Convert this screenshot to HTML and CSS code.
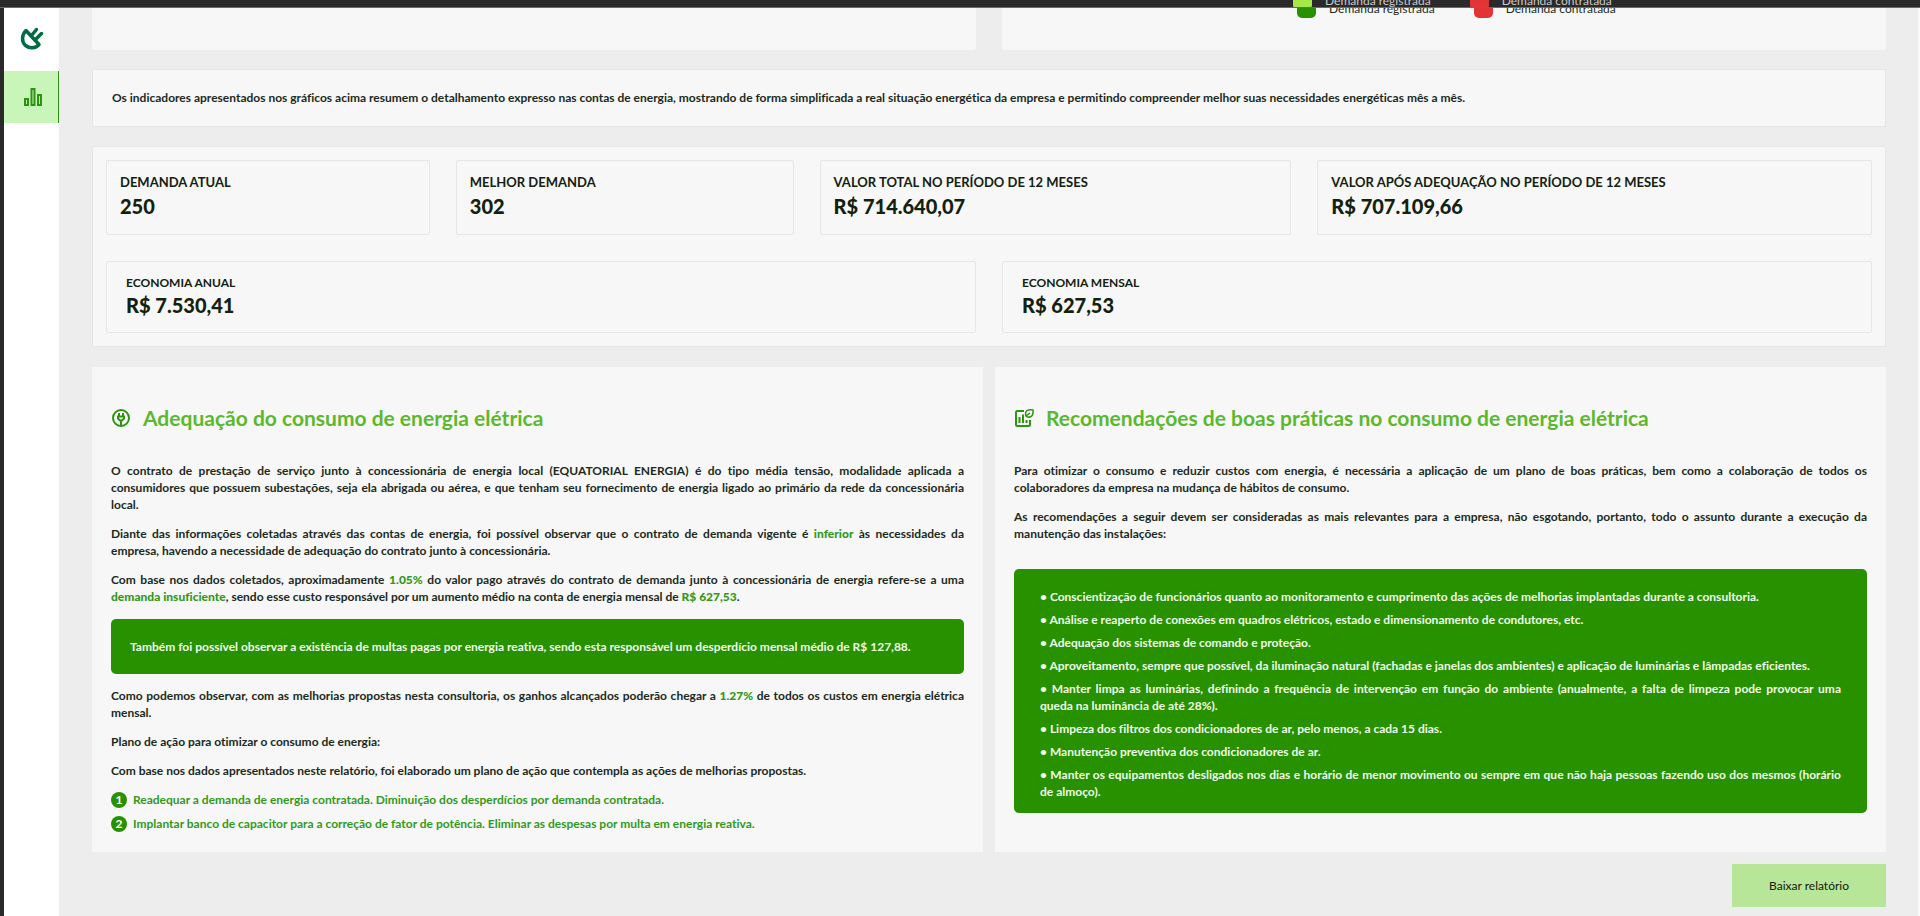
FILE: index.html
```html
<!DOCTYPE html>
<html lang="pt-BR">
<head>
<meta charset="utf-8">
<title>Relatório de demanda</title>
<link rel="stylesheet" href="styles.css">
</head>
<body>
<div class="topbar">
  <div class="legend legend-top">
    <span class="legend-item"><i class="swatch lime"></i>Demanda registrada</span>
    <span class="legend-item"><i class="swatch red"></i>Demanda contratada</span>
  </div>
</div>
<div class="shell">
  <nav class="sidebar" aria-label="Principal">
    <a class="logo" href="#" aria-label="Início">
      <svg width="24" height="24" viewBox="0 0 24 24" fill="none" stroke="#006b45" stroke-width="3.500" stroke-linecap="round" stroke-linejoin="round"><path d="M6 4.500C1.500 9 1.500 16 5.500 19.500C10 23 15.500 22.500 19 18.500Z"/><path d="M11.500 9.500L16.500 3.500M15.500 13.500L21.500 7.500"/></svg>
    </a>
    <a class="nav-item" href="#" aria-label="Relatórios">
      <svg width="20" height="20" viewBox="0 0 20 20" fill="none" stroke="#2c9410" stroke-width="2"><path d="M2 12h3v6H2zM8.500 2h3v16h-3zM15 8h3v10h-3z"/></svg>
    </a>
  </nav>
  <main class="content">
    <div class="charts">
      <section class="chart-card"></section>
      <section class="chart-card">
        <div class="legend">
          <span class="legend-item"><i class="swatch green"></i>Demanda registrada</span>
          <span class="legend-item"><i class="swatch red"></i>Demanda contratada</span>
        </div>
      </section>
    </div>
    <p class="notice">Os indicadores apresentados nos gráficos acima resumem o detalhamento expresso nas contas de energia, mostrando de forma simplificada a real situação energética da empresa e permitindo compreender melhor suas necessidades energéticas mês a mês.</p>
    <section class="summary">
      <div class="row four">
        <div class="stat"><h3>DEMANDA ATUAL</h3><strong>250</strong></div>
        <div class="stat"><h3>MELHOR DEMANDA</h3><strong>302</strong></div>
        <div class="stat"><h3>VALOR TOTAL NO PERÍODO DE 12 MESES</h3><strong>R$ 714.640,07</strong></div>
        <div class="stat"><h3>VALOR APÓS ADEQUAÇÃO NO PERÍODO DE 12 MESES</h3><strong>R$ 707.109,66</strong></div>
      </div>
      <div class="row two">
        <div class="stat small"><h3>ECONOMIA ANUAL</h3><strong>R$ 7.530,41</strong></div>
        <div class="stat small"><h3>ECONOMIA MENSAL</h3><strong>R$ 627,53</strong></div>
      </div>
    </section>
    <div class="panels">
      <section class="panel">
        <h2><svg width="20" height="20" viewBox="0 0 20 20" fill="none" stroke="#2c9410" stroke-width="2"><circle cx="10" cy="10" r="8"/><path d="M8 5v3M12 5v3M10 13v5"/><path d="M6 8.500h8M7 8.500v2l2 2h2l2-2v-2"/></svg>Adequação do consumo de energia elétrica</h2>
        <p>O contrato de prestação de serviço junto à concessionária de energia local (EQUATORIAL ENERGIA) é do tipo média tensão, modalidade aplicada a consumidores que possuem subestações, seja ela abrigada ou aérea, e que tenham seu fornecimento de energia ligado ao primário da rede da concessionária local.</p>
        <p>Diante das informações coletadas através das contas de energia, foi possível observar que o contrato de demanda vigente é <b>inferior</b> às necessidades da empresa,&nbsp;havendo a necessidade de adequação do contrato junto à concessionária.</p>
        <p>Com base nos dados coletados, aproximadamente <b>1.05%</b> do valor pago através do contrato de demanda junto à concessionária de energia refere-se a uma <b>demanda insuficiente</b>, sendo esse custo responsável por um aumento médio na conta de energia mensal de <b>R$ 627,53</b>.</p>
        <p class="callout">Também foi possível observar a existência de multas pagas por energia reativa, sendo esta responsável um desperdício mensal médio de R$ 127,88.</p>
        <p>Como podemos observar, com as melhorias propostas nesta consultoria, os ganhos alcançados poderão chegar a <b>1.27%</b> de todos os custos em energia elétrica mensal.</p>
        <p>Plano de ação para otimizar o consumo de energia:</p>
        <p>Com base nos dados apresentados neste relatório, foi elaborado um plano de ação que contempla as ações de melhorias propostas.</p>
        <ol class="plan">
          <li><span class="num">1</span>Readequar a demanda de energia contratada. Diminuição dos desperdícios por demanda contratada.</li>
          <li><span class="num">2</span>Implantar banco de capacitor para a correção de fator de potência. Eliminar as despesas por multa em energia reativa.</li>
        </ol>
      </section>
      <section class="panel">
        <h2><svg width="20" height="20" viewBox="0 0 20 20" fill="none" stroke="#2c9410" stroke-width="2"><path d="M10 3H3.500Q2 3 2 4.500V16.500Q2 18 3.500 18H14.500Q16 18 16 16.500V12"/><path d="M5.500 9v6M9 6.500V15M12.500 12v3"/><path d="M12 8Q10.500 3 14.500 2Q16.500 1.500 19 2Q19.500 8 16 9Q13.500 9.500 12 8L16 5" stroke-width="1.500"/></svg>Recomendações de boas práticas no consumo de energia elétrica</h2>
        <p>Para otimizar o consumo e reduzir custos com energia, é necessária a aplicação de um plano de boas práticas, bem como a colaboração de todos os colaboradores da empresa na mudança de hábitos de consumo.</p>
        <p>As recomendações a seguir devem ser consideradas as mais relevantes para a empresa, não esgotando, portanto, todo o assunto durante a execução da manutenção das instalações:</p>
        <ul class="tips">
          <li>• Conscientização de funcionários quanto ao monitoramento e cumprimento das ações de melhorias implantadas durante a consultoria.</li>
          <li>• Análise e reaperto de conexões em quadros elétricos, estado e dimensionamento de condutores, etc.</li>
          <li>• Adequação dos sistemas de comando e proteção.</li>
          <li>• Aproveitamento, sempre que possível, da iluminação natural (fachadas e janelas dos ambientes) e aplicação de luminárias e lâmpadas eficientes.</li>
          <li>• Manter limpa as luminárias, definindo a frequência de intervenção em função do ambiente (anualmente, a falta de limpeza pode provocar uma queda&nbsp;na luminância de até 28%).</li>
          <li>• Limpeza dos filtros dos condicionadores de ar, pelo menos, a cada 15 dias.</li>
          <li>• Manutenção preventiva dos condicionadores de ar.</li>
          <li>• Manter os equipamentos desligados nos dias e horário de menor movimento ou sempre em que não haja pessoas fazendo uso dos mesmos (horário de almoço).</li>
        </ul>
      </section>
    </div>
    <button class="download" type="button">Baixar relatório</button>
  </main>
</div>
</body>
</html>
```
FILE: styles.css
```css
* { box-sizing: border-box; }
body {
  margin: 0;
  min-height: 100vh;
  display: flex;
  flex-direction: column;
  background: #2b2a2a;
  color: #1b2a1c;
  font: 700 12px/17px Lato, "Open Sans", sans-serif;
  font-variant-ligatures: none;
}
h2, h3, p, ol, ul { margin: 0; padding: 0; font-size: inherit; }
li { list-style: none; }

.topbar {
  display: flex;
  align-items: flex-end;
  height: 8px;
  overflow: hidden;
  border-bottom: 1px solid #6a6a6a;
}
.legend { display: flex; gap: 39px; font-size: 12px; font-weight: 400; line-height: 16px; margin: 0 0 32px 295px; }
.legend-top { margin: 0 0 -3px 1293px; color: #c9c9c9; }
.legend-item { display: flex; align-items: center; gap: 13px; white-space: nowrap; }
.swatch { width: 19px; height: 19px; border-radius: 5px; }
.green { background: #279100; }
.lime { background: #a5e848; }
.red { background: #e13434; }

.shell { flex: 1; display: flex; margin-left: 4px; background: #ededed; border-right: 2px solid #fafafa; }
.sidebar { flex: none; width: 55px; background: #fff; }
.logo { display: flex; justify-content: center; padding: 18px 0 21px; }
.logo svg { display: block; }
.nav-item {
  display: flex;
  align-items: center;
  justify-content: center;
  height: 52px;
  padding-left: 3px;
  background: #c8f5b8;
  border-right: 1px solid #2c9410;
}

.content { flex: 1; min-width: 0; padding: 0 32px 0 33px; display: flex; flex-direction: column; }
.charts { display: grid; grid-template-columns: 1fr 1fr; gap: 26px; }
.chart-card { display: flex; align-items: flex-end; height: 42px; overflow: hidden; background: #f7f7f7; border-radius: 0 0 3px 3px; }
.notice { margin-top: 19px; padding: 19px 19px 20px; background: #f7f7f7; border: 1px solid #e6e6e6; }
.summary { display: grid; gap: 26px; margin-top: 19px; padding: 13px; background: #f7f7f7; border: 1px solid #e6e6e6; }
.row { display: grid; gap: 26px; }
.four { grid-template-columns: 324fr 338fr 472fr 555fr; }
.two { grid-template-columns: 1fr 1fr; }
.stat { padding: 10px 13px 15px; border: 1px solid #e6e6e6; border-radius: 2px; color: #13210f; }
.stat h3 { font-size: 13px; line-height: 22px; }
.stat strong { display: block; font-size: 20px; line-height: 26px; }
.stat.small { padding: 11px 19px 14px; }
.small h3 { font-size: 12px; line-height: 20px; }
.small strong { line-height: 25px; }

.panels { display: grid; grid-template-columns: 1fr 1fr; gap: 12px; margin-top: 20px; }
.panel { padding: 38px 19px 20px; background: #f7f7f7; }
.panel h2 { display: flex; align-items: center; gap: 12px; margin-bottom: 31px; font-size: 21px; line-height: 26px; color: #5cb82c; }
.panel p { margin-bottom: 12px; text-align: justify; }
.panel b { color: #319a1a; }
.panel .callout { margin: 14px 0 13px; padding: 19px; border-radius: 5px; background: #279100; color: #effbe9; }
.plan { display: grid; gap: 7px; color: #319a1a; }
.plan li { display: flex; align-items: center; gap: 6px; }
.num { flex: none; width: 16px; border-radius: 8px; line-height: 16px; text-align: center; background: #279100; color: #fff; }
.tips { display: grid; gap: 6px; margin-top: 27px; padding: 19px 26px 13px; border-radius: 5px; background: #279100; color: #effbe9; text-align: justify; }
.download {
  align-self: flex-end;
  margin-top: 12px;
  padding: 13px 37px;
  border: 0;
  background: #b8e698;
  color: #10200c;
  font: 400 12px/17px Lato, "Open Sans", sans-serif;
}
```
